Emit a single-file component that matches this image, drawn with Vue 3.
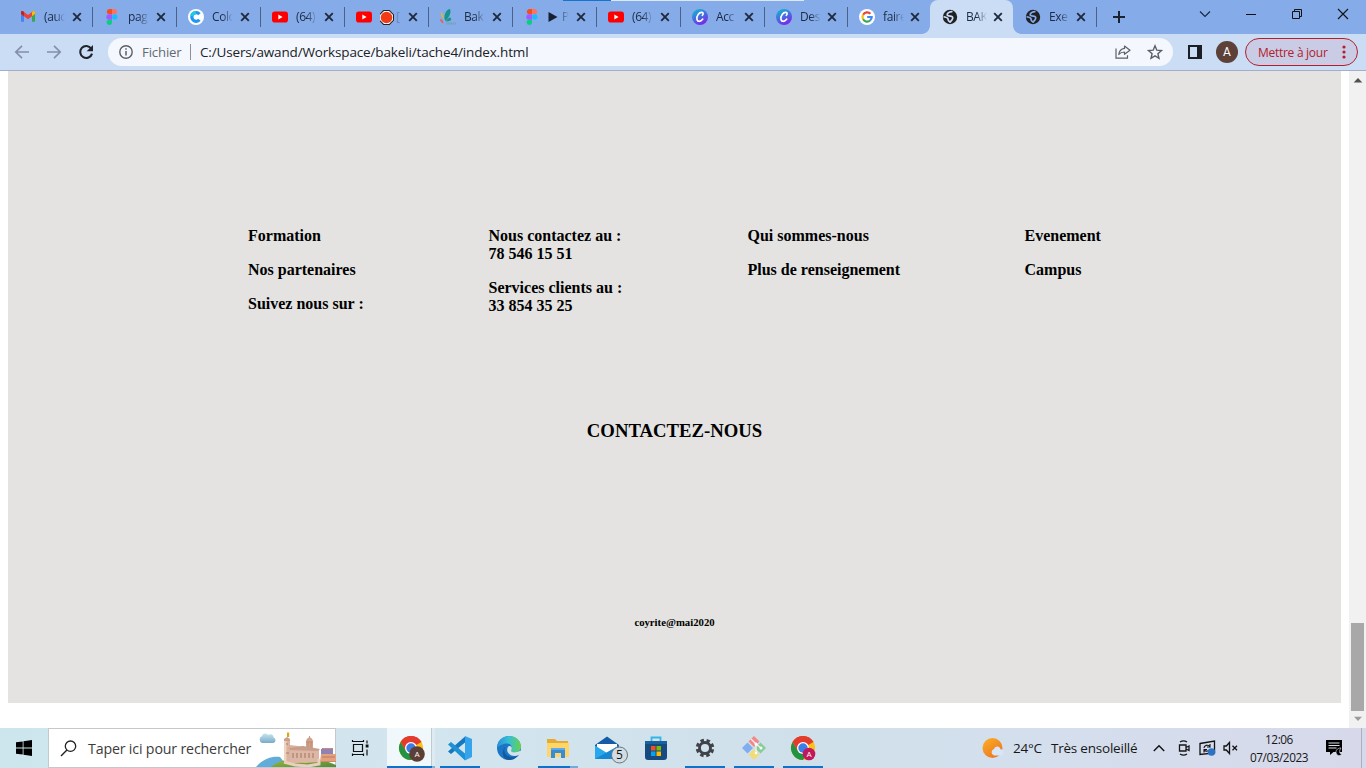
<script setup>
const tabs = [
  { icon: 'gmail', title: '(auc' },
  { icon: 'figma', title: 'pag' },
  { icon: 'colo', title: 'Colo' },
  { icon: 'youtube', title: '(64)' },
  { icon: 'youtube', title: '[', record: true },
  { icon: 'bakeli', title: 'Bak' },
  { icon: 'figma', title: 'P', play: true },
  { icon: 'youtube', title: '(64)' },
  { icon: 'canva', title: 'Acc' },
  { icon: 'canva', title: 'Des' },
  { icon: 'google', title: 'faire' },
  { icon: 'globe', title: 'BAK', active: true },
  { icon: 'globe', title: 'Exe' },
]
const columns = [
  [['Formation'], ['Nos partenaires'], ['Suivez nous sur :']],
  [['Nous contactez au :', '78 546 15 51'], ['Services clients au :', '33 854 35 25']],
  [['Qui sommes-nous'], ['Plus de renseignement']],
  [['Evenement'], ['Campus']],
]
const apps = [
  { id: 'chrome', line: 'wide', current: true },
  { id: 'code', line: 'full' },
  { id: 'edge' },
  { id: 'explorer', line: 'split' },
  { id: 'mail' },
  { id: 'store' },
  { id: 'gear', line: 'full' },
  { id: 'git', line: 'full' },
  { id: 'chrome', line: 'full', pink: true },
]
</script>

<template>
  <div class="screen">
    <div class="strip">
      <div class="edge-line"><i class="el-blue"></i><i class="el-white"></i></div>
      <div v-for="(t, i) in tabs" :key="i" class="tab" :class="{ active: t.active, slim: i > 8, nosep: i === 10 || t.active }">
        <svg class="fav" viewBox="0 0 16 16">
          <g v-if="t.icon === 'gmail'">
            <path d="M1 3.500v9.300h3V7z" fill="#4285f4" /><path d="M15 3.500v9.300h-3V7z" fill="#34a853" />
            <path d="M1 3.300C1 1.800 2.600 1.800 3.300 2.400L8 6l4.700-3.600C13.500 1.800 15 1.800 15 3.300V5L8 10.200 1 5z" fill="#ea4335" />
            <path d="M12 3v4.300l3-2.200V3.300c0-1.300-1.500-1.500-2.200-.9z" fill="#fbbc04" /><path d="M1 3.300V5l3 2.300V3C2.700 1.600 1 2 1 3.300z" fill="#c5221f" />
          </g>
          <g v-else-if="t.icon === 'figma'">
            <path d="M8 0H5a2.700 2.700 0 0 0 0 5.300h3z" fill="#f24e1e" /><path d="M8 0h3a2.700 2.700 0 0 1 0 5.300H8z" fill="#ff7262" />
            <path d="M8 5.300H5a2.700 2.700 0 0 0 0 5.400h3z" fill="#a259ff" /><circle cx="10.800" cy="8" r="2.700" fill="#1abcfe" />
            <path d="M8 10.700H5A2.700 2.700 0 1 0 8 13.300z" fill="#0acf83" />
          </g>
          <g v-else-if="t.icon === 'colo'">
            <circle cx="8" cy="8" r="8" fill="#fff" /><path d="M11.400 5.200A4.300 4.300 0 1 0 11.400 10.800" fill="none" stroke="#2196f3" stroke-width="3.300" /><path d="M3.700 7A4.300 4.300 0 0 1 8 3.700" fill="none" stroke="#21c8e8" stroke-width="3.300" />
          </g>
          <g v-else-if="t.icon === 'youtube'">
            <rect x="0" y="2.600" width="16" height="11" rx="2.800" fill="#f00" /><path d="M6.300 5.600 10.600 8.100 6.300 10.600z" fill="#fff" />
          </g>
          <g v-else-if="t.icon === 'bakeli'">
            <path d="M5.500 12C2.500 8 6 0 10 0c1.500 3-.5 8-4.500 12z" fill="#16948c" /><path d="M6 12.500c1-2.500 3-4 4.500-4l.8 2.300c-1 1-3.300 1.900-5.300 1.700z" fill="#16948c" />
            <path d="M.8 3c1.800 1 3 4 2.800 7C1.500 8.500.8 6 .8 3z" fill="#e4b32e" /><path d="M0 10c2 0 3.500 2 3.500 4.500C1.500 14.300 0 12.500 0 10z" fill="#e5645c" /><path d="M6 14.500h10" stroke="#6fa3b5" stroke-width="2" stroke-dasharray="1.500 .7" />
          </g>
          <g v-else-if="t.icon === 'canva'">
            <defs><linearGradient id="cv" x1="0" y1="0" x2=".5" y2="1"><stop offset="0" stop-color="#05c5cb" /><stop offset=".5" stop-color="#3f77df" /><stop offset="1" stop-color="#782be7" /></linearGradient></defs>
            <circle cx="8" cy="8" r="8" fill="url(#cv)" /><path d="M10.300 6.300c1.200-.8 1.200-2.700-.4-2.900C7 3 4.500 7 4.900 9.900c.3 3.200 3.600 3.200 5.900.2" fill="none" stroke="#fff" stroke-width="1.600" stroke-linecap="round" />
          </g>
          <g v-else-if="t.icon === 'google'" fill="none" stroke-width="2.200">
            <circle cx="8" cy="8" r="8" fill="#fff" /><path d="M4.100 5.700A4.600 4.600 0 0 1 11.400 4.800" stroke="#ea4335" /><path d="M4.100 5.700a4.700 4.700 0 0 0 0 4.600" stroke="#fbbc05" />
            <path d="M4.100 10.300a4.600 4.600 0 0 0 7 1.200" stroke="#34a853" /><path d="M8.200 8h4.500c0 1.500-.6 2.700-1.600 3.500" stroke="#4285f4" />
          </g>
          <g v-else>
            <circle cx="8" cy="8" r="7.200" fill="#202124" />
            <path d="M9.800 2.600C7 3 5.200 4.300 5.200 5.800c0 1.300 1.600 1.300 3 1.300 1.600 0 2.700.8 2.500 2.300-.2 1.600-1.500 2.600-2.700 3.700M2.200 7.900c1.600.4 3.600.7 3.800 2 .1.900.2 1.600.9 2.200" fill="none" :stroke="t.active ? '#cbdcf5' : '#85ace9'" stroke-width="1.700" stroke-linecap="round" stroke-linejoin="round" />
          </g>
        </svg>
        <span class="title">
          <svg v-if="t.record" class="rec" viewBox="0 0 14 14"><path d="M4.300.5h5.400l3.800 3.800v5.400l-3.800 3.800H4.300L.5 9.700V4.300z" fill="#fff" stroke="#222" /><circle cx="7" cy="7" r="5.400" fill="#f03b16" /></svg>
          <svg v-if="t.play" class="play" viewBox="0 0 10 12"><path d="M.5 1 9.500 6l-9 5z" fill="#17202f" /></svg>{{ t.title }}
        </span>
        <svg class="close" viewBox="0 0 10 10"><path d="M1.200 1.200 8.800 8.800M8.800 1.200 1.200 8.800" stroke="#202a3b" stroke-width="1.900" /></svg>
      </div>
      <svg class="plus" viewBox="0 0 12 12"><path d="M6 0v12M0 6h12" stroke="#1b2330" stroke-width="2" /></svg>
      <div class="winbtns">
        <svg viewBox="0 0 12 12"><path d="m1 3.500 5 5 5-5" fill="none" stroke="#18253b" stroke-width="1.100" /></svg>
        <svg viewBox="0 0 12 12"><path d="M1 6.500h10" stroke="#111" /></svg>
        <svg viewBox="0 0 12 12"><path d="M1.500 3.500h7v7h-7zM3.500 3V1.500h7v7H9" fill="none" stroke="#111" /></svg>
        <svg viewBox="0 0 12 12"><path d="m1 1 10 10M11 1 1 11" stroke="#111" stroke-width="1.100" /></svg>
      </div>
    </div>

    <div class="toolbar">
      <div class="nav">
        <svg viewBox="0 0 16 16"><path d="M15 8H2M8 1.800 1.800 8 8 14.200" fill="none" stroke="#8390a8" stroke-width="1.700" /></svg>
        <svg viewBox="0 0 16 16"><path d="M1 8h13M8 1.800 14.200 8 8 14.200" fill="none" stroke="#8390a8" stroke-width="1.700" /></svg>
        <svg viewBox="0 0 16 16"><path d="M13.200 4.600A6 6 0 1 0 14 9.600" fill="none" stroke="#1f232a" stroke-width="2.100" /><path d="M15 1v6.300H8.700z" fill="#1f232a" /></svg>
      </div>
      <div class="omni">
        <svg class="info" viewBox="0 0 14 14"><circle cx="7" cy="7" r="6.200" fill="none" stroke="#5a5f66" stroke-width="1.400" /><path d="M7 6v4.500M7 3.300v1.500" stroke="#5a5f66" stroke-width="1.500" /></svg>
        <span class="file">Fichier</span><i class="bar"></i><span class="url">C:/Users/awand/Workspace/bakeli/tache4/index.html</span>
        <svg class="share" viewBox="0 0 16 14"><path d="M1 3.500v9.700h11.500v-3" fill="none" stroke="#5a5f66" stroke-width="1.200" /><path d="M9.500 1 15 5.200 9.500 9.300V7C7 7 5.300 7.600 3.800 9.500 4.200 6 6 3.800 9.500 3.400z" fill="none" stroke="#5a5f66" stroke-width="1.200" stroke-linejoin="round" /></svg>
        <svg class="star" viewBox="0 0 16 16"><path d="m8 1.800 1.800 4.400 4.700.4-3.600 3.100 1.100 4.600L8 11.800l-4 2.500 1.100-4.600-3.600-3.100 4.700-.4z" fill="none" stroke="#5a5f66" stroke-width="1.400" /></svg>
      </div>
      <svg class="panel" viewBox="0 0 14 14"><path d="M1 1h12v12H1z" fill="none" stroke="#1b1e24" stroke-width="2" /><path d="M9 1h4v12H9z" fill="#1b1e24" /></svg>
      <span class="avatar">A</span>
      <div class="update"><span>Mettre à jour</span><svg viewBox="0 0 4 14"><g fill="#b3202b"><circle cx="2" cy="2" r="1.600" /><circle cx="2" cy="7" r="1.600" /><circle cx="2" cy="12" r="1.600" /></g></svg></div>
    </div>

    <div class="viewport">
      <main class="page">
        <div class="columns">
          <div v-for="(c, i) in columns" :key="i">
            <p v-for="(p, j) in c" :key="j"><span v-for="l in p" :key="l">{{ l }}</span></p>
          </div>
        </div>
        <h3>CONTACTEZ-NOUS</h3>
        <h6>coyrite@mai2020</h6>
      </main>
      <div class="scroll">
        <svg viewBox="0 0 10 6"><path d="M5 1 9.300 5.500H.7z" fill="#505050" /></svg>
        <i class="thumb"></i>
        <svg viewBox="0 0 10 6"><path d="M5 5 9 .8H1z" fill="#9b9b9b" /></svg>
      </div>
    </div>

    <div class="taskbar">
      <div class="start"><svg viewBox="0 0 16 16"><path d="M0 2.300 6.700 1.400v6.100H0zM7.500 1.300 16 0v7.500H7.500zM0 8.400h6.700v6.200L0 13.700zM7.500 8.400H16V16l-8.500-1.300z" fill="#000" /></svg></div>
      <div class="search">
        <svg class="lens" viewBox="0 0 17 17"><circle cx="10.500" cy="6.200" r="5.200" fill="none" stroke="#222" stroke-width="1.300" /><path d="M6.900 9.900 1 15.900" stroke="#222" stroke-width="1.400" /></svg>
        <span>Taper ici pour rechercher</span>
        <svg class="city" viewBox="0 0 80 38">
          <defs><linearGradient id="cl" x1="0" y1="0" x2="0" y2="1"><stop offset="0" stop-color="#c5e4ef" /><stop offset="1" stop-color="#79abc8" /></linearGradient><linearGradient id="gr" x1="0" y1="0" x2="1" y2="1"><stop offset="0" stop-color="#9ab83c" /><stop offset="1" stop-color="#4d8735" /></linearGradient></defs>
          <path d="M6 14a3.800 3.800 0 0 1 0-7c1-3 5-3 6-1 3-2 6 0 5.500 2.500 3 1 2.500 5.500-.5 5.500z" fill="url(#cl)" />
          <path d="M0 38C6 31 14 27 24 28l8 10z" fill="#62acd9" /><path d="M15 38c8-7 20-9 32-8 15-1 26 3 33 6v4z" fill="url(#gr)" />
          <path d="M66 19h11v6h3v8H64z" fill="#c68c76" /><path d="M65 20h12v5H65z" fill="#8f83b6" /><path d="M65 25h15v7H65z" fill="#e5a27a" /><path d="M66 28h13" stroke="#bb7866" />
          <path d="M28 32V12h6v4l16 2v14l-12 3z" fill="#d9b39f" /><path d="M28 12h2.500v20H28z" fill="#efd3bd" />
          <path d="M28 12v-2l3-2 3 2v2z" fill="#c9a090" /><path d="M31 8V3.500h2.200V8z" fill="#dca81a" />
          <path d="M50 13c0-6 7-6 7 0v7h-7z" fill="#d5a18b" /><path d="M50 13h7M52 13v6M55 13v6M53.500 9V7" stroke="#b08872" stroke-width=".8" />
          <path d="M34 20l14-2 15 3v12l-14 1-15-1z" fill="#ddb7a3" /><path d="m33 19 14-2 17 3-2 2-28-1z" fill="#c89d8c" />
          <path d="M37 29v-5m4 5v-5m4 5v-5m4 5v-5m4 5v-5m4 5v-5" stroke="#a37d6b" stroke-width="1.100" /><path d="M28 33l11 3 13 1 11-2v-5" fill="none" stroke="#ead0bc" stroke-width="3" /><path d="M30 24h3M30 15h2" stroke="#a67f70" />
        </svg>
      </div>
      <div class="taskview"><svg viewBox="0 0 18 18"><path d="M2.500 5.500h9v7h-9zM1 2.500h12M1 15.500h12M1.500 1v2M12.500 1v2M1.500 17v-2.500M12.500 17v-2.500" fill="none" stroke="#111" stroke-width="1.200" /><path d="M16 1.500v3M16 10.500v6" stroke="#111" stroke-width="1.200" /><path d="M14.700 5.500h2.800v3h-2.800z" fill="#111" /></svg></div>
      <div class="apps">
        <div v-for="(a, i) in apps" :key="i" class="app" :class="[a.line, { current: a.current }]">
          <svg viewBox="0 0 28 28">
            <g v-if="a.id === 'chrome'">
              <circle cx="14" cy="14" r="12" fill="#fbc116" /><path d="M14 14 3.600 8A12 12 0 0 1 24.400 8z" fill="#e33b2e" /><path d="M3.600 8a12 12 0 0 0 10.400 18l5-9H9z" fill="#229342" />
              <path d="M14 8h10.400A12 12 0 0 0 3.600 8l5.200 9z" fill="#e33b2e" /><circle cx="14" cy="14" r="6" fill="#fff" /><circle cx="14" cy="14" r="4.700" fill="#3c7de8" />
              <circle cx="20" cy="20" :r="a.pink ? 6.300 : 7.800" :fill="a.pink ? '#c2185b' : '#5c4037'" /><text x="20" y="22.800" text-anchor="middle" class="badge-a">A</text>
            </g>
            <g v-else-if="a.id === 'code'">
              <path d="M19 2.500v6L5 20l-3-2.500z" fill="#1479bd" /><path d="M2 10.500 5 8l14 11.500v7z" fill="#1e90d6" /><path d="M19 2 26 5v18l-7 3.500z" fill="#35a4ec" />
            </g>
            <g v-else-if="a.id === 'edge'">
              <defs><linearGradient id="eg"><stop offset="0" stop-color="#278fd8" /><stop offset=".5" stop-color="#37c0d4" /><stop offset="1" stop-color="#67d24b" /></linearGradient></defs>
              <circle cx="14" cy="14" r="12" fill="#1b77c5" /><path d="M2 14C2 7 7.500 2 14 2c7 0 12 5 12 10.500 0 4-3 6-7 6-3 0-3.500-1-3-2 2-3 0-7-4-7C7.500 9.500 4 12 2 14z" fill="url(#eg)" />
              <path d="M10 13c-2 5 1 10 7 10 3 0 6-1.500 7-3-3 5-8 6-10 6-5 0-7-5-6-9 .5-2 1-3 2-4z" fill="#155aa0" /><path d="M14 12c2.500-.5 3.600 2 2.200 4.200-.8 1.700 2 2.300 4 2 2-.1 3.600-.7 5-1.700l2 2.500-3.500 2c-4.500 2.500-11 0-11.500-4.500 0-2 .3-3.800 1.800-4.500z" fill="#d2e3ec" />
            </g>
            <g v-else-if="a.id === 'explorer'">
              <path d="M3 5h8l2 2h11v16H3z" fill="#e4ad31" /><path d="M3 9h22v14H3z" fill="#ffd468" /><path d="M7 14h14v10h-4v-5h-6v5H7z" fill="#398bd2" /><path d="M7 14h14v2H7z" fill="#5aabe9" />
            </g>
            <g v-else-if="a.id === 'mail'">
              <path d="M2 11 14 2.500 26 11v14H2z" fill="#145ca5" /><path d="M4 10h20v10H4z" fill="#fff" /><path d="M2 11.500 14 19l12-7.500V25H2z" fill="#28a8ea" /><path d="M2 25 26 11.500V25z" fill="#1687d4" />
              <circle cx="26.500" cy="21" r="8" fill="#d2dce2" stroke="#68757c" /><text x="26.500" y="25.300" text-anchor="middle" class="count">5</text>
            </g>
            <g v-else-if="a.id === 'store'">
              <path d="M9.500 8V3.500h9V8" fill="none" stroke="#34b5e8" stroke-width="1.800" /><path d="M3 7h22v16c0 2-1 3-3 3H6c-2 0-3-1-3-3z" fill="#174b80" /><path d="M3 7h22v3H3z" fill="#19619f" />
              <path d="M9 12h4.500v4.500H9z" fill="#f25022" /><path d="M14.500 12H19v4.500h-4.500z" fill="#7fba00" /><path d="M9 17.500h4.500V22H9z" fill="#00a4ef" /><path d="M14.500 17.500H19V22h-4.500z" fill="#ffb900" />
            </g>
            <g v-else-if="a.id === 'gear'" fill="none" stroke="#3f4349">
              <circle cx="14" cy="14" r="7.600" stroke-width="3.400" stroke-dasharray="3.400 2.569" transform="rotate(9.700 14 14)" /><circle cx="14" cy="14" r="5.500" stroke-width="2.900" />
            </g>
            <g v-else>
              <path d="m14 2 5.500 5.500L14 13 8.500 7.500z" fill="#f28888" /><path d="M7.500 8.500 13 14l-5.500 5.500L2 14z" fill="#80acf0" /><path d="m20.500 8.500 5.500 5.500-5.500 5.500L15 14z" fill="#87cd93" /><path d="m14 15 5.500 5.500L14 26l-5.500-5.500z" fill="#f2dc78" />
              <path d="m11 5 5 5v9M16 10l5 4" fill="none" stroke="#eef3f6" stroke-width="1.300" /><circle cx="16" cy="10" r="1.500" fill="#fff" /><circle cx="21" cy="14" r="1.500" fill="#fff" /><circle cx="16" cy="19" r="1.300" fill="#fff" />
            </g>
          </svg>
        </div>
      </div>
      <div class="tray">
        <svg class="sun" viewBox="0 0 22 22"><defs><linearGradient id="sn" x1="0" y1="0" x2=".7" y2="1"><stop offset="0" stop-color="#fbb024" /><stop offset="1" stop-color="#ed7622" /></linearGradient></defs><circle cx="10.500" cy="11" r="10" fill="url(#sn)" /><path d="M12 18.500a3.400 3.400 0 0 1 0-6.500c1.500-4 6-3 6.500.2 4 0 4 6 .3 6.300z" fill="#d8e7f8" /></svg>
        <span class="temp">24°C</span><span class="meteo">Très ensoleillé</span>
        <svg class="up" viewBox="0 0 12 8"><path d="m.8 7 5.200-5.300L11.200 7" fill="none" stroke="#111" stroke-width="1.400" /></svg>
        <svg class="cam" viewBox="0 0 14 16"><path d="M2.500 5h6.500v6H2.500zM9 7.500 12 6v4.500L9 9M3 2c2-1.300 5-1.300 7 0M3 14c2 1.300 5 1.300 7 0" fill="none" stroke="#151515" stroke-width="1.300" /></svg>
        <svg class="sync" viewBox="0 0 17 16"><path d="M1 3.500 15.500 1v12L1 14.500z" fill="none" stroke="#111" stroke-width="1.300" /><path d="M5 8c0-2.500 4-4 6-1.500V4M11 7H8M11 9c0 2-4 3-6 1v2.500M5 9.500h3" fill="none" stroke="#111" stroke-width="1.100" /><circle cx="12.500" cy="12" r="3.800" fill="#2d73c4" /></svg>
        <svg class="vol" viewBox="0 0 16 14"><path d="M1 5h2.300L6.500 1.500v11L3.300 9H1z" fill="none" stroke="#111" stroke-width="1.300" /><path d="m9.500 4.800 4.500 4.500M14 4.800 9.500 9.300" stroke="#111" stroke-width="1.300" /></svg>
        <div class="clock"><span>12:06</span><span class="date">07/03/2023</span></div>
        <svg class="note" viewBox="0 0 18 18"><path d="M1 1h16v12H8.500L5 16v-3H1z" fill="#000" /><path d="M3.500 4h11M3.500 6.500h11M3.500 9h8" stroke="#dae1e8" /><path d="M16 9c-4 0-6 3-4.500 6C13 17.500 16 16.500 17 15c-2.500.3-3.300-3-1-6z" fill="#000" stroke="#d6ddea" stroke-width=".7" /></svg>
        <i class="peek"></i>
      </div>
    </div>
  </div>
</template>

<style>
html, body { margin: 0; overflow: hidden; background: #fff; }
</style>
<style scoped>
* { box-sizing: border-box; }
svg { display: block; flex: none; overflow: visible; }
.screen { width: 1366px; height: 768px; display: flex; flex-direction: column; font-family: "Open Sans", "Noto Sans", sans-serif; overflow: hidden; }
.strip { height: 34px; flex: none; background: #85ace9; display: flex; padding-left: 8px; position: relative; }
.edge-line { position: absolute; left: 563px; top: 0; display: flex; height: 1px; }
.el-blue { width: 48px; background: #1674ce; }
.el-white { width: 193px; background: #dce8f8; }
.tab { width: 84px; height: 34px; flex: none; display: flex; align-items: center; padding-left: 12px; position: relative; }
.tab.slim { width: 83px; }
.tab::after { content: ""; position: absolute; right: -1px; top: 7px; width: 1px; height: 20px; background: #4b6187; }
.tab.nosep::after { display: none; }
.tab.active { background: #cbdcf5; border-radius: 8px 8px 0 0; }
.tab.active::before { content: ""; position: absolute; left: -8px; right: -8px; bottom: 0; height: 8px; background: radial-gradient(circle at 0 0, transparent 7.500px, #cbdcf5 8px) left / 8px 8px no-repeat, radial-gradient(circle at 100% 0, transparent 7.500px, #cbdcf5 8px) right / 8px 8px no-repeat; }
.fav { width: 16px; height: 16px; }
.title { width: 21px; height: 20px; margin-left: 8px; overflow: hidden; display: flex; align-items: center; white-space: nowrap; font-size: 12px; letter-spacing: -.4px; line-height: 20px; color: #1c2a43; -webkit-mask-image: linear-gradient(90deg, #000 50%, transparent 100%); mask-image: linear-gradient(90deg, #000 50%, transparent 100%); }
.tab:has(.rec) .title { -webkit-mask-image: none; mask-image: none; color: #6988bd; }
.rec { width: 15px; height: 15px; margin: 0 2px 0 -1px; }
.play { width: 10px; height: 12px; margin-right: 4px; }
.close { width: 10px; height: 10px; margin-left: 7px; }
.slim .close { margin-left: 6px; }
.plus { width: 12px; height: 12px; margin: 11px 0 0 17px; }
.winbtns { display: flex; gap: 34px; margin: 8px 0 0 74px; }
.winbtns svg { width: 12px; height: 12px; }
.toolbar { height: 37px; flex: none; background: #cbdcf5; border-bottom: 1px solid #a3afc8; display: flex; align-items: center; }
.nav { display: flex; gap: 16px; margin-left: 14px; width: 94px; }
.nav svg { width: 16px; height: 16px; }
.omni { width: 1065px; height: 28px; border-radius: 14px; background: #f4f8fe; display: flex; align-items: center; padding-left: 11px; font-size: 13.500px; letter-spacing: -.15px; color: #202124; white-space: nowrap; }
.info { width: 14px; height: 14px; }
.file { width: 48px; margin-left: 9px; color: #646970; font-size: 13.200px; }
.bar { width: 1px; height: 16px; background: #8c9199; }
.url { margin-left: 9px; width: 915px; }
.share { width: 16px; height: 14px; }
.star { width: 16px; height: 16px; margin-left: 16px; }
.panel { width: 14px; height: 14px; margin-left: 15px; }
.avatar { width: 22px; height: 22px; border-radius: 50%; background: #5d4037; color: #fff; font: 12px/22px Roboto, sans-serif; text-align: center; margin-left: 14px; }
.update { width: 113px; height: 28px; margin-left: 7px; border: 1px solid #b3202b; border-radius: 14px; background: #c9cce4; display: flex; align-items: center; justify-content: space-between; padding: 0 11px 0 12px; color: #b3202b; font-size: 12px; letter-spacing: -.28px; white-space: nowrap; }
.update svg { width: 4px; height: 14px; }
.viewport { flex: 1; display: flex; justify-content: space-between; background: #fff; padding-left: 8px; }
.page { width: 1333px; height: 632px; background: #e4e3e1; padding-top: 156px; color: #000; font-family: "Liberation Serif", "Times New Roman", serif; font-weight: bold; }
.columns { display: grid; grid-template-columns: 240.500px 259px 277px auto; padding-left: 240px; height: 86px; font-size: 16px; line-height: 18px; }
.columns p { margin: 0 0 16px; }
.columns p span { display: block; }
h3 { margin: 107px 0 0; font-size: 18.720px; line-height: 22px; text-align: center; }
h6 { margin: 174px 0 0; font-size: 10.720px; line-height: 13px; text-align: center; }
.scroll { width: 17px; background: #f1f1f1; display: flex; flex-direction: column; align-items: center; padding: 6px 0 6px; }
.scroll svg { width: 10px; height: 6px; }
.thumb { width: 13px; height: 88px; background: #a8a8a8; margin: auto 0 5px; }
.taskbar { height: 40px; flex: none; background: linear-gradient(90deg, #cde6ed 0, #d3e5ee 30%, #cfe0ea 60%, #d4dfed 75%, #d7d9ea 100%); display: flex; position: relative; }
.start { width: 48px; display: flex; align-items: center; justify-content: center; }
.start svg { width: 16px; height: 16px; }
.search { width: 288px; background: #fff; border: 1px solid #c4c9cd; display: flex; align-items: center; padding-left: 11px; font-size: 14.200px; letter-spacing: -.16px; color: #3c3c3c; position: relative; white-space: nowrap; }
.lens { width: 17px; height: 17px; margin-right: 11px; }
.city { width: 80px; height: 38px; position: absolute; right: -1px; top: 0; overflow: hidden; }
.taskview { width: 48px; display: flex; align-items: center; justify-content: center; }
.taskview svg { width: 18px; height: 18px; }
.apps { display: flex; margin-left: 2.500px; }
.app { width: 49px; height: 40px; display: flex; align-items: center; justify-content: center; position: relative; }
.app svg { width: 28px; height: 28px; }
.app.current { background: linear-gradient(90deg, #f1f8fb 44px, #bdccd2 44px 45px, #deebf0 45px 48px, transparent 48px); }
.app.full::after, .app.wide::after, .app.split::after { content: ""; position: absolute; bottom: 0; left: 4.500px; width: 40px; height: 2px; background: #0874cf; }
.app.wide::after { left: .5px; width: 48px; background: linear-gradient(90deg, #0874cf 45px, #79b2df 45px); }
.app.split::after { background: linear-gradient(90deg, #0874cf 32px, #70acdd 32px); }
.badge-a { font: 8px Roboto, sans-serif; fill: #fff; }
.count { font: 12px "Open Sans", sans-serif; fill: #111; }
.tray { display: flex; align-items: center; margin-left: auto; font-size: 13.500px; letter-spacing: -.22px; color: #171717; white-space: nowrap; }
.sun { width: 22px; height: 22px; }
.temp { width: 38px; margin-left: 9px; }
.meteo { width: 87px; }
.up { width: 12px; height: 8px; margin-left: 15px; }
.cam { width: 14px; height: 16px; margin-left: 12px; }
.sync { width: 17px; height: 16px; margin-left: 8px; }
.vol { width: 16px; height: 14px; margin-left: 7px; }
.clock { width: 70px; margin-left: 5px; display: flex; flex-direction: column; align-items: center; font-size: 11.800px; letter-spacing: -.45px; line-height: 18px; }
.note { width: 18px; height: 18px; margin-left: 11px; }
.peek { width: 1px; height: 40px; background: #aab0bf; margin: 0 4px 0 18px; }
</style>
